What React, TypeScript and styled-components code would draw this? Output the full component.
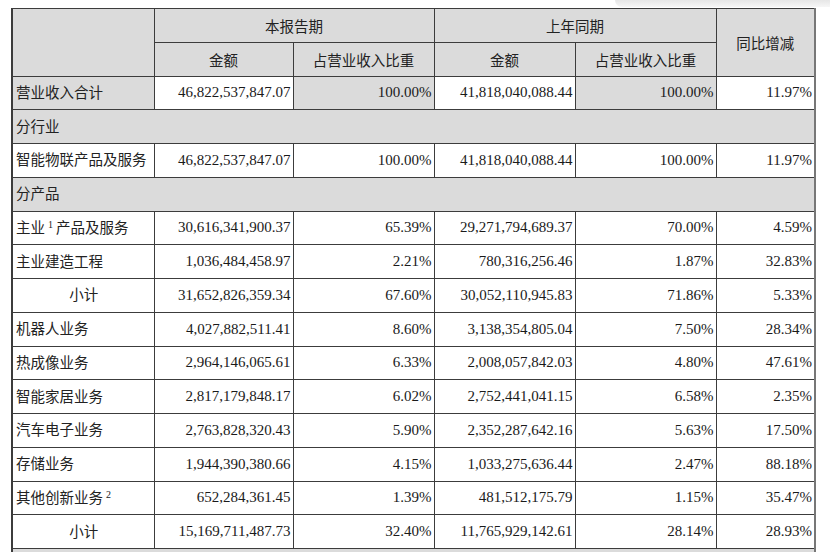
import React from 'react'
import styled, { createGlobalStyle } from 'styled-components'

const GlobalStyle = createGlobalStyle`
    html, body {
        margin: 0;
        background: #ffffff;
    }
    body {
        font-family: 'Liberation Serif', 'Noto Sans CJK SC', serif;
        color: #1a1a1a;
        overflow: hidden;
    }
`

const GREY = '#dbdbdb'
const LINE = '#3c3c3c'

const Page = styled.div`
    position: relative;
    width: 830px;
    height: 552px;
    padding: 8px 0 0 11px;
    box-sizing: border-box;
    overflow: hidden;
`

// faint shadow left by a floating bar above the page
const TopShade = styled.div`
    position: absolute;
    top: 0;
    right: 0;
    width: 215px;
    height: 7px;
    border-bottom-left-radius: 10px;
    background: linear-gradient(to bottom, #e6e6e6, #f6f6f6);
`

const Table = styled.table`
    border-collapse: collapse;
    table-layout: fixed;
    width: 803px;
    border-left: 2px solid ${LINE};
    border-right: 2px solid #777;
    font-size: 15px;
`

const Row = styled.tr`
    height: 33.75px;
`

const Cell = styled.td<{ $grey?: boolean; $align?: 'left' | 'right' | 'center' }>`
    border: 1px solid ${LINE};
    background: ${(p) => (p.$grey ? GREY : '#ffffff')};
    text-align: ${(p) => p.$align || 'right'};
    padding: 0 2px 0 3px;
    white-space: nowrap;
    line-height: 1;
    vertical-align: middle;
`

const Head = styled.th`
    border: 1px solid ${LINE};
    background: ${GREY};
    font-weight: normal;
    text-align: center;
    color: #333;
    padding: 0;
`

const Label = styled.span`
    font-family: 'Noto Sans CJK SC', sans-serif;
    font-size: 14.5px;
    color: #222;
`

const Sup = styled.sup`
    font-family: 'Liberation Serif', serif;
    font-size: 10px;
    margin: 0 3px;
    vertical-align: 5px;
`

type Line = {
    label: React.ReactNode
    cur: string
    curPct: string
    prev: string
    prevPct: string
    yoy: string
    indent?: boolean
}

const rows: Line[] = [
    { label: <>主业<Sup>1</Sup>产品及服务</>, cur: '30,616,341,900.37', curPct: '65.39%', prev: '29,271,794,689.37', prevPct: '70.00%', yoy: '4.59%' },
    { label: '主业建造工程', cur: '1,036,484,458.97', curPct: '2.21%', prev: '780,316,256.46', prevPct: '1.87%', yoy: '32.83%' },
    { label: '小计', cur: '31,652,826,359.34', curPct: '67.60%', prev: '30,052,110,945.83', prevPct: '71.86%', yoy: '5.33%', indent: true },
    { label: '机器人业务', cur: '4,027,882,511.41', curPct: '8.60%', prev: '3,138,354,805.04', prevPct: '7.50%', yoy: '28.34%' },
    { label: '热成像业务', cur: '2,964,146,065.61', curPct: '6.33%', prev: '2,008,057,842.03', prevPct: '4.80%', yoy: '47.61%' },
    { label: '智能家居业务', cur: '2,817,179,848.17', curPct: '6.02%', prev: '2,752,441,041.15', prevPct: '6.58%', yoy: '2.35%' },
    { label: '汽车电子业务', cur: '2,763,828,320.43', curPct: '5.90%', prev: '2,352,287,642.16', prevPct: '5.63%', yoy: '17.50%' },
    { label: '存储业务', cur: '1,944,390,380.66', curPct: '4.15%', prev: '1,033,275,636.44', prevPct: '2.47%', yoy: '88.18%' },
    { label: <>其他创新业务<Sup>2</Sup></>, cur: '652,284,361.45', curPct: '1.39%', prev: '481,512,175.79', prevPct: '1.15%', yoy: '35.47%' },
    { label: '小计', cur: '15,169,711,487.73', curPct: '32.40%', prev: '11,765,929,142.61', prevPct: '28.14%', yoy: '28.93%', indent: true },
]

function DataRow({ line, greyPct }: { line: Line; greyPct?: boolean }) {
    return (
        <Row>
            <Cell $grey={greyPct} $align={line.indent ? 'center' : 'left'}>
                <Label>{line.label}</Label>
            </Cell>
            <Cell>{line.cur}</Cell>
            <Cell $grey={greyPct}>{line.curPct}</Cell>
            <Cell>{line.prev}</Cell>
            <Cell $grey={greyPct}>{line.prevPct}</Cell>
            <Cell>{line.yoy}</Cell>
        </Row>
    )
}

function SectionRow({ title }: { title?: string }) {
    return (
        <Row>
            <Cell $grey $align="left" colSpan={6}>
                {title && <Label>{title}</Label>}
            </Cell>
        </Row>
    )
}

export default function App() {
    return (
        <>
            <GlobalStyle />
            <Page>
                <TopShade />
                <Table>
                    <colgroup>
                        <col style={{ width: 142 }} />
                        <col style={{ width: 139 }} />
                        <col style={{ width: 141 }} />
                        <col style={{ width: 141 }} />
                        <col style={{ width: 141 }} />
                        <col style={{ width: 99 }} />
                    </colgroup>
                    <thead>
                        <Row>
                            <Head rowSpan={2} />
                            <Head colSpan={2}>
                                <Label>本报告期</Label>
                            </Head>
                            <Head colSpan={2}>
                                <Label>上年同期</Label>
                            </Head>
                            <Head rowSpan={2}>
                                <Label>同比增减</Label>
                            </Head>
                        </Row>
                        <Row>
                            <Head>
                                <Label>金额</Label>
                            </Head>
                            <Head>
                                <Label>占营业收入比重</Label>
                            </Head>
                            <Head>
                                <Label>金额</Label>
                            </Head>
                            <Head>
                                <Label>占营业收入比重</Label>
                            </Head>
                        </Row>
                    </thead>
                    <tbody>
                        <DataRow
                            greyPct
                            line={{
                                label: '营业收入合计',
                                cur: '46,822,537,847.07',
                                curPct: '100.00%',
                                prev: '41,818,040,088.44',
                                prevPct: '100.00%',
                                yoy: '11.97%',
                            }}
                        />
                        <SectionRow title="分行业" />
                        <DataRow
                            line={{
                                label: '智能物联产品及服务',
                                cur: '46,822,537,847.07',
                                curPct: '100.00%',
                                prev: '41,818,040,088.44',
                                prevPct: '100.00%',
                                yoy: '11.97%',
                            }}
                        />
                        <SectionRow title="分产品" />
                        {rows.map((r, i) => (
                            <DataRow key={i} line={r} />
                        ))}
                        <SectionRow />
                    </tbody>
                </Table>
            </Page>
        </>
    )
}
